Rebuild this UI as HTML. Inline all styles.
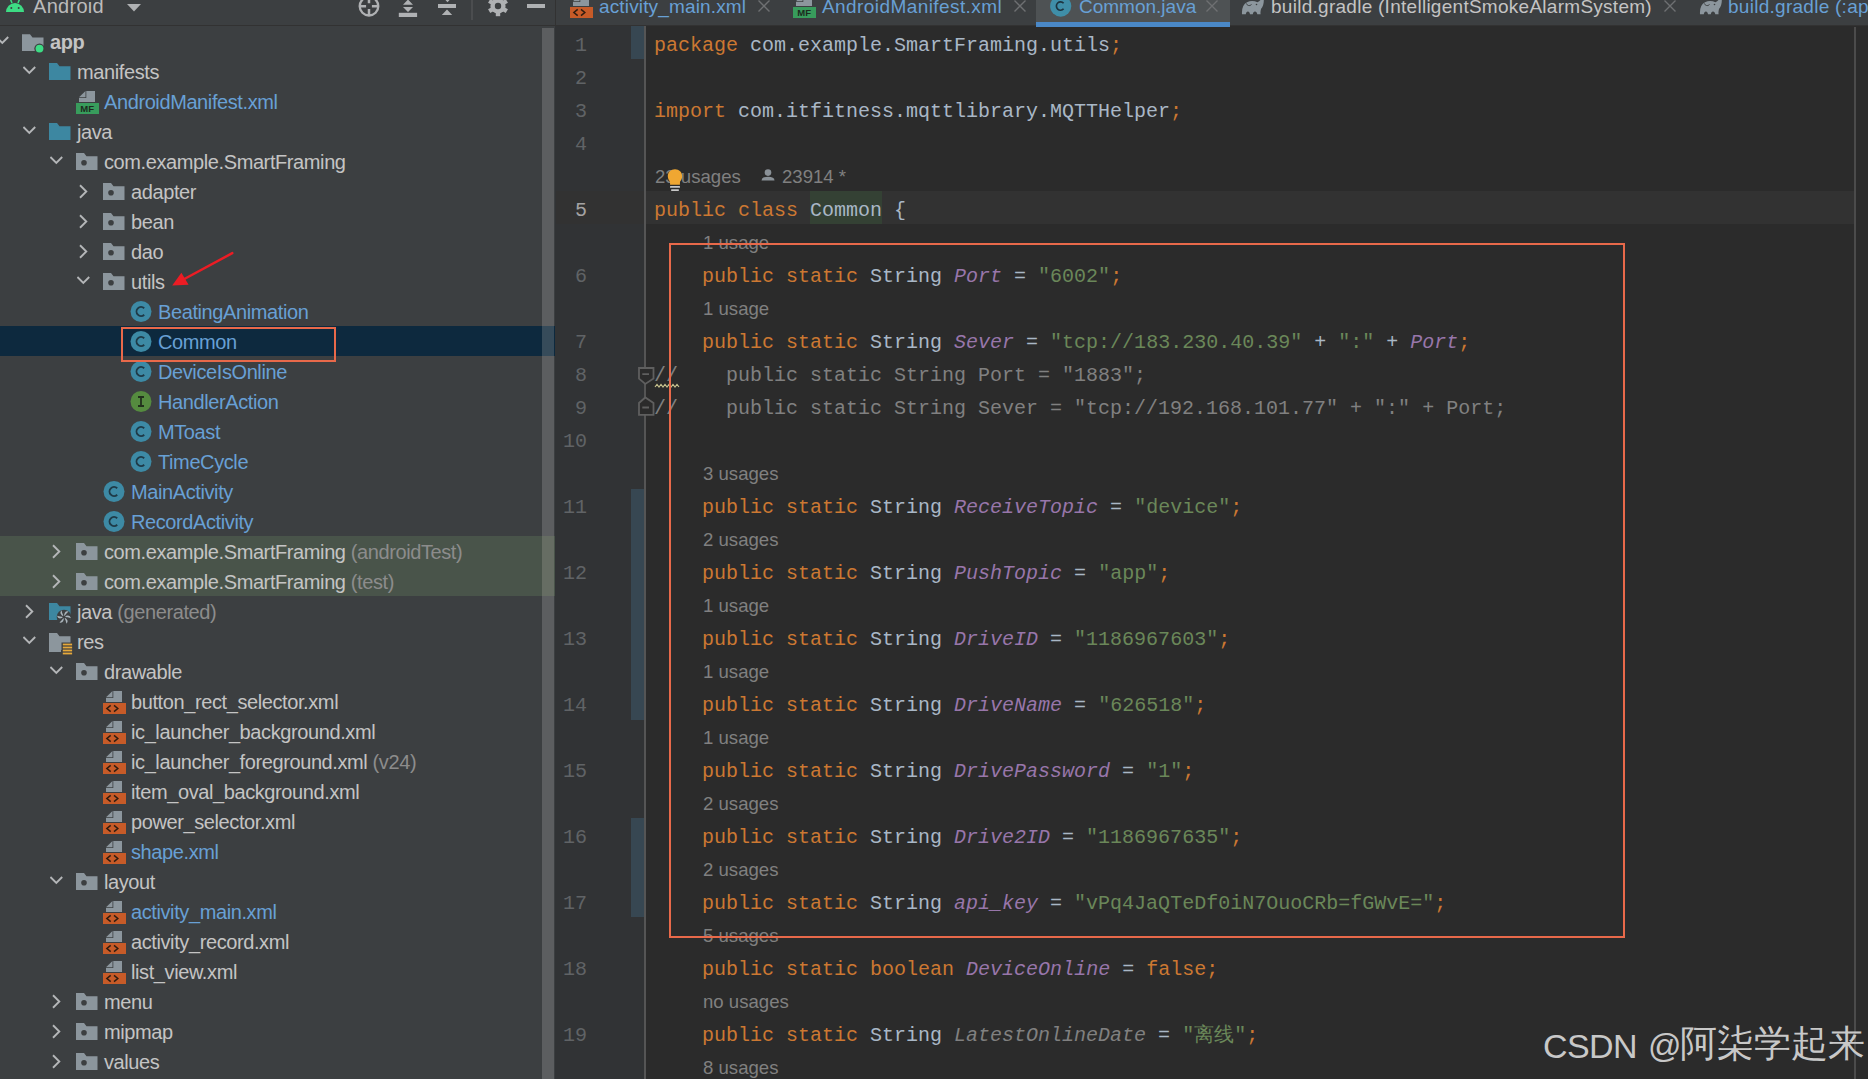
<!DOCTYPE html><html><head><meta charset="utf-8"><style>
*{margin:0;padding:0;box-sizing:border-box}
html,body{width:1868px;height:1079px;overflow:hidden;background:#2b2b2b}
.abs{position:absolute}
#panel{position:absolute;left:0;top:0;width:555px;height:1079px;background:#3c3f41;overflow:hidden}
#phead{position:absolute;left:0;top:0;width:556px;height:26px;background:#3c3f41;border-bottom:1px solid #323232}
.tr{position:absolute;left:0;width:556px;height:30px}
.chev,.ic{position:absolute;top:0;height:30px}
.tt{position:absolute;top:1px;height:30px;line-height:30px;font-family:"Liberation Sans",sans-serif;font-size:20px;letter-spacing:-0.4px;white-space:pre;color:#c4c4c4}
#editor{position:absolute;left:556px;top:0;width:1312px;height:1079px;background:#2b2b2b;overflow:hidden}
#tabs{position:absolute;left:0;top:0;width:1312px;height:26px;background:#3c3f41;border-bottom:1px solid #323232}
.tab{position:absolute;top:0;height:26px;font-family:"Liberation Sans",sans-serif;font-size:19px;line-height:26px;white-space:pre}
#gutter{position:absolute;left:555px;top:26px;width:91px;height:1053px;background:#313335}
.ln{position:absolute;left:556px;width:31px;text-align:right;height:33px;padding-top:7px;line-height:26px;font-family:"Liberation Mono",monospace;font-size:20px;color:#606366}
.ln.cur{color:#a4a3a3}
.cl{position:absolute;left:654px;height:33px;line-height:33px;padding-top:7px;line-height:26px;font-family:"Liberation Mono",monospace;font-size:20px;white-space:pre;color:#a9b7c6}
.k{color:#cc7832} .s{color:#6a8759} .f{color:#9876aa;font-style:italic} .c{color:#808080}
.un{color:#808080;font-style:italic}
.hl{background:#344134}
.hint{position:absolute;height:33px;padding-top:2px;line-height:33px;font-family:"Liberation Sans",sans-serif;font-size:18.6px;white-space:pre;color:#808080}
</style></head><body>
<div id="panel">
<div id="phead">
<svg class="abs" style="left:5px;top:-3px" width="20" height="16" viewBox="0 0 20 16"><path d="M1 15 A9 9 0 0 1 19 15 Z" fill="#3ddc84"/><path d="M5 1 L7 6 M15 1 L13 6" stroke="#3ddc84" stroke-width="1.5"/><circle cx="6.3" cy="11" r="1" fill="#3c3f41"/><circle cx="13.7" cy="11" r="1" fill="#3c3f41"/></svg>
<div class="abs" style="left:33px;top:-7px;line-height:26px;font-family:'Liberation Sans',sans-serif;font-size:20px;letter-spacing:0.3px;color:#bbbbbb">Android</div>
<svg class="abs" style="left:127px;top:4px" width="14" height="8" viewBox="0 0 14 8"><path d="M0 0 H14 L7 7.5 Z" fill="#afb1b3"/></svg>
<svg class="abs" style="left:358px;top:-5px" width="22" height="22" viewBox="0 0 22 22"><circle cx="11" cy="11.2" r="9.3" fill="none" stroke="#afb1b3" stroke-width="2.3"/><path d="M11 1 V8.3 M11 14.1 V21 M1.5 11.2 H8.1 M13.9 11.2 H20.5" stroke="#afb1b3" stroke-width="2.5"/></svg>
<svg class="abs" style="left:398px;top:0px" width="20" height="18" viewBox="0 0 20 18"><path d="M5 4.8 L10 -0.5 L15 4.8 Z M5 7 H15 L10 12 Z" fill="#afb1b3"/><rect x="0.8" y="12.8" width="18.3" height="4.2" fill="#afb1b3"/></svg>
<svg class="abs" style="left:438px;top:0px" width="20" height="18" viewBox="0 0 20 18"><rect x="0" y="4" width="18" height="4" fill="#afb1b3"/><path d="M3.8 15.1 L9 9.6 L14.2 15.1 Z M7 -0.5 H12 L9.5 2.2 Z" fill="#afb1b3"/></svg>
<div class="abs" style="left:471px;top:0;width:2px;height:20px;background:#4b4d4f"></div>
<svg class="abs" style="left:487.5px;top:-4px" width="20" height="21" viewBox="0 0 20 21"><g fill="#afb1b3"><circle cx="10" cy="10" r="7.6"/><rect x="7.8" y="-0.2" width="4.4" height="5" transform="rotate(0 10 10)"/><rect x="7.8" y="-0.2" width="4.4" height="5" transform="rotate(60 10 10)"/><rect x="7.8" y="-0.2" width="4.4" height="5" transform="rotate(120 10 10)"/><rect x="7.8" y="-0.2" width="4.4" height="5" transform="rotate(180 10 10)"/><rect x="7.8" y="-0.2" width="4.4" height="5" transform="rotate(240 10 10)"/><rect x="7.8" y="-0.2" width="4.4" height="5" transform="rotate(300 10 10)"/></g><circle cx="10" cy="10" r="3.2" fill="#3c3f41"/></svg>
<div class="abs" style="left:527px;top:4px;width:18px;height:3.6px;background:#afb1b3"></div>
</div>
<div class="tr" style="top:26px;"><div class="chev" style="left:-4px"><svg width="14" height="30" viewBox="0 0 14 30"><path d="M0.4 11 L6.3 16.9 L12.2 11" fill="none" stroke="#b4b6b8" stroke-width="1.9"/></svg></div><div class="ic" style="left:22px"><svg width="26" height="30" viewBox="0 0 26 30"><path d="M0 8.2 H8 L10.5 11.5 H21.5 V25 H0 Z" fill="#8c969d"/><circle cx="17.5" cy="22.6" r="5.2" fill="#3c3f41"/><circle cx="17.5" cy="22.6" r="3.9" fill="#3ddc84"/></svg></div><div class="tt" style="left:50px;color:#c4c4c4;font-weight:bold;">app</div></div><div class="tr" style="top:56px;"><div class="chev" style="left:23px"><svg width="14" height="30" viewBox="0 0 14 30"><path d="M0.4 11 L6.3 16.9 L12.2 11" fill="none" stroke="#b4b6b8" stroke-width="1.9"/></svg></div><div class="ic" style="left:49px"><svg width="26" height="30" viewBox="0 0 26 30"><path d="M0 7 H8 L10.5 10.3 H21.5 V24 H0 Z" fill="#3d87a1"/></svg></div><div class="tt" style="left:77px;color:#c4c4c4;">manifests</div></div><div class="tr" style="top:86px;"><div class="ic" style="left:76px"><svg width="26" height="30" viewBox="0 0 26 30"><path d="M10.3 5 H19 V16 H3 V12 H10.3 Z" fill="#8c969d"/><path d="M3 11.2 L9.5 5 V11.2 Z" fill="#8c969d"/><rect x="0" y="17" width="23" height="11" fill="#389c5c"/><text x="11.3" y="26.3" font-family="Liberation Sans" font-size="9.5" font-weight="bold" fill="#1c2b20" text-anchor="middle" letter-spacing="0.2">MF</text></svg></div><div class="tt" style="left:104px;color:#68a0d5;">AndroidManifest.xml</div></div><div class="tr" style="top:116px;"><div class="chev" style="left:23px"><svg width="14" height="30" viewBox="0 0 14 30"><path d="M0.4 11 L6.3 16.9 L12.2 11" fill="none" stroke="#b4b6b8" stroke-width="1.9"/></svg></div><div class="ic" style="left:49px"><svg width="26" height="30" viewBox="0 0 26 30"><path d="M0 7 H8 L10.5 10.3 H21.5 V24 H0 Z" fill="#3d87a1"/></svg></div><div class="tt" style="left:77px;color:#c4c4c4;">java</div></div><div class="tr" style="top:146px;"><div class="chev" style="left:50px"><svg width="14" height="30" viewBox="0 0 14 30"><path d="M0.4 11 L6.3 16.9 L12.2 11" fill="none" stroke="#b4b6b8" stroke-width="1.9"/></svg></div><div class="ic" style="left:76px"><svg width="26" height="30" viewBox="0 0 26 30"><path d="M0 7 H8 L10.5 10.3 H21.5 V24 H0 Z" fill="#8c969d"/><circle cx="8" cy="16.8" r="2.8" fill="#3c3f41"/></svg></div><div class="tt" style="left:104px;color:#c4c4c4;">com.example.SmartFraming</div></div><div class="tr" style="top:176px;"><div class="chev" style="left:77px"><svg width="14" height="30" viewBox="0 0 14 30"><path d="M3 9.3 L9.3 15.5 L3 21.7" fill="none" stroke="#b4b6b8" stroke-width="1.9"/></svg></div><div class="ic" style="left:103px"><svg width="26" height="30" viewBox="0 0 26 30"><path d="M0 7 H8 L10.5 10.3 H21.5 V24 H0 Z" fill="#8c969d"/><circle cx="8" cy="16.8" r="2.8" fill="#3c3f41"/></svg></div><div class="tt" style="left:131px;color:#c4c4c4;">adapter</div></div><div class="tr" style="top:206px;"><div class="chev" style="left:77px"><svg width="14" height="30" viewBox="0 0 14 30"><path d="M3 9.3 L9.3 15.5 L3 21.7" fill="none" stroke="#b4b6b8" stroke-width="1.9"/></svg></div><div class="ic" style="left:103px"><svg width="26" height="30" viewBox="0 0 26 30"><path d="M0 7 H8 L10.5 10.3 H21.5 V24 H0 Z" fill="#8c969d"/><circle cx="8" cy="16.8" r="2.8" fill="#3c3f41"/></svg></div><div class="tt" style="left:131px;color:#c4c4c4;">bean</div></div><div class="tr" style="top:236px;"><div class="chev" style="left:77px"><svg width="14" height="30" viewBox="0 0 14 30"><path d="M3 9.3 L9.3 15.5 L3 21.7" fill="none" stroke="#b4b6b8" stroke-width="1.9"/></svg></div><div class="ic" style="left:103px"><svg width="26" height="30" viewBox="0 0 26 30"><path d="M0 7 H8 L10.5 10.3 H21.5 V24 H0 Z" fill="#8c969d"/><circle cx="8" cy="16.8" r="2.8" fill="#3c3f41"/></svg></div><div class="tt" style="left:131px;color:#c4c4c4;">dao</div></div><div class="tr" style="top:266px;"><div class="chev" style="left:77px"><svg width="14" height="30" viewBox="0 0 14 30"><path d="M0.4 11 L6.3 16.9 L12.2 11" fill="none" stroke="#b4b6b8" stroke-width="1.9"/></svg></div><div class="ic" style="left:103px"><svg width="26" height="30" viewBox="0 0 26 30"><path d="M0 7 H8 L10.5 10.3 H21.5 V24 H0 Z" fill="#8c969d"/><circle cx="8" cy="16.8" r="2.8" fill="#3c3f41"/></svg></div><div class="tt" style="left:131px;color:#c4c4c4;">utils</div></div><div class="tr" style="top:296px;"><div class="ic" style="left:130px"><svg width="26" height="30" viewBox="0 0 26 30"><circle cx="11" cy="15.5" r="10.5" fill="#3d8aa5"/><path d="M14.2 12.3 A4.5 4.5 0 1 0 14.2 18.7" fill="none" stroke="#1f3a47" stroke-width="1.9"/></svg></div><div class="tt" style="left:158px;color:#68a0d5;">BeatingAnimation</div></div><div class="tr" style="top:326px;background:#0d293e;"><div class="ic" style="left:130px"><svg width="26" height="30" viewBox="0 0 26 30"><circle cx="11" cy="15.5" r="10.5" fill="#3d8aa5"/><path d="M14.2 12.3 A4.5 4.5 0 1 0 14.2 18.7" fill="none" stroke="#1f3a47" stroke-width="1.9"/></svg></div><div class="tt" style="left:158px;color:#68a0d5;">Common</div></div><div class="tr" style="top:356px;"><div class="ic" style="left:130px"><svg width="26" height="30" viewBox="0 0 26 30"><circle cx="11" cy="15.5" r="10.5" fill="#3d8aa5"/><path d="M14.2 12.3 A4.5 4.5 0 1 0 14.2 18.7" fill="none" stroke="#1f3a47" stroke-width="1.9"/></svg></div><div class="tt" style="left:158px;color:#68a0d5;">DeviceIsOnline</div></div><div class="tr" style="top:386px;"><div class="ic" style="left:130px"><svg width="26" height="30" viewBox="0 0 26 30"><circle cx="11" cy="15.5" r="10.5" fill="#558b3f"/><path d="M8 11 H14 M11 11 V20 M8 20 H14" fill="none" stroke="#22301d" stroke-width="1.8"/></svg></div><div class="tt" style="left:158px;color:#68a0d5;">HandlerAction</div></div><div class="tr" style="top:416px;"><div class="ic" style="left:130px"><svg width="26" height="30" viewBox="0 0 26 30"><circle cx="11" cy="15.5" r="10.5" fill="#3d8aa5"/><path d="M14.2 12.3 A4.5 4.5 0 1 0 14.2 18.7" fill="none" stroke="#1f3a47" stroke-width="1.9"/></svg></div><div class="tt" style="left:158px;color:#68a0d5;">MToast</div></div><div class="tr" style="top:446px;"><div class="ic" style="left:130px"><svg width="26" height="30" viewBox="0 0 26 30"><circle cx="11" cy="15.5" r="10.5" fill="#3d8aa5"/><path d="M14.2 12.3 A4.5 4.5 0 1 0 14.2 18.7" fill="none" stroke="#1f3a47" stroke-width="1.9"/></svg></div><div class="tt" style="left:158px;color:#68a0d5;">TimeCycle</div></div><div class="tr" style="top:476px;"><div class="ic" style="left:103px"><svg width="26" height="30" viewBox="0 0 26 30"><circle cx="11" cy="15.5" r="10.5" fill="#3d8aa5"/><path d="M14.2 12.3 A4.5 4.5 0 1 0 14.2 18.7" fill="none" stroke="#1f3a47" stroke-width="1.9"/></svg></div><div class="tt" style="left:131px;color:#68a0d5;">MainActivity</div></div><div class="tr" style="top:506px;"><div class="ic" style="left:103px"><svg width="26" height="30" viewBox="0 0 26 30"><circle cx="11" cy="15.5" r="10.5" fill="#3d8aa5"/><path d="M14.2 12.3 A4.5 4.5 0 1 0 14.2 18.7" fill="none" stroke="#1f3a47" stroke-width="1.9"/></svg></div><div class="tt" style="left:131px;color:#68a0d5;">RecordActivity</div></div><div class="tr" style="top:536px;background:#49544a;"><div class="chev" style="left:50px"><svg width="14" height="30" viewBox="0 0 14 30"><path d="M3 9.3 L9.3 15.5 L3 21.7" fill="none" stroke="#b4b6b8" stroke-width="1.9"/></svg></div><div class="ic" style="left:76px"><svg width="26" height="30" viewBox="0 0 26 30"><path d="M0 7 H8 L10.5 10.3 H21.5 V24 H0 Z" fill="#8c969d"/><circle cx="8" cy="16.8" r="2.8" fill="#3c3f41"/></svg></div><div class="tt" style="left:104px;color:#c4c4c4;">com.example.SmartFraming<span style="color:#8c8c8c"> (androidTest)</span></div></div><div class="tr" style="top:566px;background:#49544a;"><div class="chev" style="left:50px"><svg width="14" height="30" viewBox="0 0 14 30"><path d="M3 9.3 L9.3 15.5 L3 21.7" fill="none" stroke="#b4b6b8" stroke-width="1.9"/></svg></div><div class="ic" style="left:76px"><svg width="26" height="30" viewBox="0 0 26 30"><path d="M0 7 H8 L10.5 10.3 H21.5 V24 H0 Z" fill="#8c969d"/><circle cx="8" cy="16.8" r="2.8" fill="#3c3f41"/></svg></div><div class="tt" style="left:104px;color:#c4c4c4;">com.example.SmartFraming<span style="color:#8c8c8c"> (test)</span></div></div><div class="tr" style="top:596px;"><div class="chev" style="left:23px"><svg width="14" height="30" viewBox="0 0 14 30"><path d="M3 9.3 L9.3 15.5 L3 21.7" fill="none" stroke="#b4b6b8" stroke-width="1.9"/></svg></div><div class="ic" style="left:49px"><svg width="26" height="30" viewBox="0 0 26 30"><path d="M0 7 H8 L10.5 10.3 H21.5 V24 H0 Z" fill="#3d87a1"/><circle cx="15" cy="21" r="7.3" fill="#3c3f41"/><g fill="#aab4bb"><path d="M15 21 Q15 14.5 19.5 15.5 Q17 17.5 15 21 Z" transform="rotate(0 15 21)"/><path d="M15 21 Q15 14.5 19.5 15.5 Q17 17.5 15 21 Z" transform="rotate(60 15 21)"/><path d="M15 21 Q15 14.5 19.5 15.5 Q17 17.5 15 21 Z" transform="rotate(120 15 21)"/><path d="M15 21 Q15 14.5 19.5 15.5 Q17 17.5 15 21 Z" transform="rotate(180 15 21)"/><path d="M15 21 Q15 14.5 19.5 15.5 Q17 17.5 15 21 Z" transform="rotate(240 15 21)"/><path d="M15 21 Q15 14.5 19.5 15.5 Q17 17.5 15 21 Z" transform="rotate(300 15 21)"/></g><circle cx="15" cy="21" r="1.6" fill="#3c3f41"/></svg></div><div class="tt" style="left:77px;color:#c4c4c4;">java<span style="color:#8c8c8c"> (generated)</span></div></div><div class="tr" style="top:626px;"><div class="chev" style="left:23px"><svg width="14" height="30" viewBox="0 0 14 30"><path d="M0.4 11 L6.3 16.9 L12.2 11" fill="none" stroke="#b4b6b8" stroke-width="1.9"/></svg></div><div class="ic" style="left:49px"><svg width="26" height="30" viewBox="0 0 26 30"><path d="M0 7 H8 L10.5 10.3 H21.5 V24 H12 V26 H0 Z" fill="#8c969d"/><rect x="12.5" y="16.5" width="12" height="13" fill="#3c3f41"/><g fill="#e6a93a"><rect x="13.8" y="17.6" width="9.3" height="1.8"/><rect x="13.8" y="20.6" width="9.3" height="1.8"/><rect x="13.8" y="23.6" width="9.3" height="1.8"/><rect x="13.8" y="26.6" width="9.3" height="1.8"/></g></svg></div><div class="tt" style="left:77px;color:#c4c4c4;">res</div></div><div class="tr" style="top:656px;"><div class="chev" style="left:50px"><svg width="14" height="30" viewBox="0 0 14 30"><path d="M0.4 11 L6.3 16.9 L12.2 11" fill="none" stroke="#b4b6b8" stroke-width="1.9"/></svg></div><div class="ic" style="left:76px"><svg width="26" height="30" viewBox="0 0 26 30"><path d="M0 7 H8 L10.5 10.3 H21.5 V24 H0 Z" fill="#8c969d"/><circle cx="8" cy="16.8" r="2.8" fill="#3c3f41"/></svg></div><div class="tt" style="left:104px;color:#c4c4c4;">drawable</div></div><div class="tr" style="top:686px;"><div class="ic" style="left:103px"><svg width="26" height="30" viewBox="0 0 26 30"><path d="M10.3 5 H19 V16 H3 V12 H10.3 Z" fill="#8c969d"/><path d="M3 11.2 L9.5 5 V11.2 Z" fill="#8c969d"/><rect x="0" y="17" width="23" height="11" fill="#c75b28"/><path d="M7.7 19.4 L3.9 22.5 L7.7 25.6 M11 19.4 L14.8 22.5 L11 25.6" fill="none" stroke="#2e1c10" stroke-width="1.5"/></svg></div><div class="tt" style="left:131px;color:#c4c4c4;">button_rect_selector.xml</div></div><div class="tr" style="top:716px;"><div class="ic" style="left:103px"><svg width="26" height="30" viewBox="0 0 26 30"><path d="M10.3 5 H19 V16 H3 V12 H10.3 Z" fill="#8c969d"/><path d="M3 11.2 L9.5 5 V11.2 Z" fill="#8c969d"/><rect x="0" y="17" width="23" height="11" fill="#c75b28"/><path d="M7.7 19.4 L3.9 22.5 L7.7 25.6 M11 19.4 L14.8 22.5 L11 25.6" fill="none" stroke="#2e1c10" stroke-width="1.5"/></svg></div><div class="tt" style="left:131px;color:#c4c4c4;">ic_launcher_background.xml</div></div><div class="tr" style="top:746px;"><div class="ic" style="left:103px"><svg width="26" height="30" viewBox="0 0 26 30"><path d="M10.3 5 H19 V16 H3 V12 H10.3 Z" fill="#8c969d"/><path d="M3 11.2 L9.5 5 V11.2 Z" fill="#8c969d"/><rect x="0" y="17" width="23" height="11" fill="#c75b28"/><path d="M7.7 19.4 L3.9 22.5 L7.7 25.6 M11 19.4 L14.8 22.5 L11 25.6" fill="none" stroke="#2e1c10" stroke-width="1.5"/></svg></div><div class="tt" style="left:131px;color:#c4c4c4;">ic_launcher_foreground.xml<span style="color:#8c8c8c"> (v24)</span></div></div><div class="tr" style="top:776px;"><div class="ic" style="left:103px"><svg width="26" height="30" viewBox="0 0 26 30"><path d="M10.3 5 H19 V16 H3 V12 H10.3 Z" fill="#8c969d"/><path d="M3 11.2 L9.5 5 V11.2 Z" fill="#8c969d"/><rect x="0" y="17" width="23" height="11" fill="#c75b28"/><path d="M7.7 19.4 L3.9 22.5 L7.7 25.6 M11 19.4 L14.8 22.5 L11 25.6" fill="none" stroke="#2e1c10" stroke-width="1.5"/></svg></div><div class="tt" style="left:131px;color:#c4c4c4;">item_oval_background.xml</div></div><div class="tr" style="top:806px;"><div class="ic" style="left:103px"><svg width="26" height="30" viewBox="0 0 26 30"><path d="M10.3 5 H19 V16 H3 V12 H10.3 Z" fill="#8c969d"/><path d="M3 11.2 L9.5 5 V11.2 Z" fill="#8c969d"/><rect x="0" y="17" width="23" height="11" fill="#c75b28"/><path d="M7.7 19.4 L3.9 22.5 L7.7 25.6 M11 19.4 L14.8 22.5 L11 25.6" fill="none" stroke="#2e1c10" stroke-width="1.5"/></svg></div><div class="tt" style="left:131px;color:#c4c4c4;">power_selector.xml</div></div><div class="tr" style="top:836px;"><div class="ic" style="left:103px"><svg width="26" height="30" viewBox="0 0 26 30"><path d="M10.3 5 H19 V16 H3 V12 H10.3 Z" fill="#8c969d"/><path d="M3 11.2 L9.5 5 V11.2 Z" fill="#8c969d"/><rect x="0" y="17" width="23" height="11" fill="#c75b28"/><path d="M7.7 19.4 L3.9 22.5 L7.7 25.6 M11 19.4 L14.8 22.5 L11 25.6" fill="none" stroke="#2e1c10" stroke-width="1.5"/></svg></div><div class="tt" style="left:131px;color:#68a0d5;">shape.xml</div></div><div class="tr" style="top:866px;"><div class="chev" style="left:50px"><svg width="14" height="30" viewBox="0 0 14 30"><path d="M0.4 11 L6.3 16.9 L12.2 11" fill="none" stroke="#b4b6b8" stroke-width="1.9"/></svg></div><div class="ic" style="left:76px"><svg width="26" height="30" viewBox="0 0 26 30"><path d="M0 7 H8 L10.5 10.3 H21.5 V24 H0 Z" fill="#8c969d"/><circle cx="8" cy="16.8" r="2.8" fill="#3c3f41"/></svg></div><div class="tt" style="left:104px;color:#c4c4c4;">layout</div></div><div class="tr" style="top:896px;"><div class="ic" style="left:103px"><svg width="26" height="30" viewBox="0 0 26 30"><path d="M10.3 5 H19 V16 H3 V12 H10.3 Z" fill="#8c969d"/><path d="M3 11.2 L9.5 5 V11.2 Z" fill="#8c969d"/><rect x="0" y="17" width="23" height="11" fill="#c75b28"/><path d="M7.7 19.4 L3.9 22.5 L7.7 25.6 M11 19.4 L14.8 22.5 L11 25.6" fill="none" stroke="#2e1c10" stroke-width="1.5"/></svg></div><div class="tt" style="left:131px;color:#68a0d5;">activity_main.xml</div></div><div class="tr" style="top:926px;"><div class="ic" style="left:103px"><svg width="26" height="30" viewBox="0 0 26 30"><path d="M10.3 5 H19 V16 H3 V12 H10.3 Z" fill="#8c969d"/><path d="M3 11.2 L9.5 5 V11.2 Z" fill="#8c969d"/><rect x="0" y="17" width="23" height="11" fill="#c75b28"/><path d="M7.7 19.4 L3.9 22.5 L7.7 25.6 M11 19.4 L14.8 22.5 L11 25.6" fill="none" stroke="#2e1c10" stroke-width="1.5"/></svg></div><div class="tt" style="left:131px;color:#c4c4c4;">activity_record.xml</div></div><div class="tr" style="top:956px;"><div class="ic" style="left:103px"><svg width="26" height="30" viewBox="0 0 26 30"><path d="M10.3 5 H19 V16 H3 V12 H10.3 Z" fill="#8c969d"/><path d="M3 11.2 L9.5 5 V11.2 Z" fill="#8c969d"/><rect x="0" y="17" width="23" height="11" fill="#c75b28"/><path d="M7.7 19.4 L3.9 22.5 L7.7 25.6 M11 19.4 L14.8 22.5 L11 25.6" fill="none" stroke="#2e1c10" stroke-width="1.5"/></svg></div><div class="tt" style="left:131px;color:#c4c4c4;">list_view.xml</div></div><div class="tr" style="top:986px;"><div class="chev" style="left:50px"><svg width="14" height="30" viewBox="0 0 14 30"><path d="M3 9.3 L9.3 15.5 L3 21.7" fill="none" stroke="#b4b6b8" stroke-width="1.9"/></svg></div><div class="ic" style="left:76px"><svg width="26" height="30" viewBox="0 0 26 30"><path d="M0 7 H8 L10.5 10.3 H21.5 V24 H0 Z" fill="#8c969d"/><circle cx="8" cy="16.8" r="2.8" fill="#3c3f41"/></svg></div><div class="tt" style="left:104px;color:#c4c4c4;">menu</div></div><div class="tr" style="top:1016px;"><div class="chev" style="left:50px"><svg width="14" height="30" viewBox="0 0 14 30"><path d="M3 9.3 L9.3 15.5 L3 21.7" fill="none" stroke="#b4b6b8" stroke-width="1.9"/></svg></div><div class="ic" style="left:76px"><svg width="26" height="30" viewBox="0 0 26 30"><path d="M0 7 H8 L10.5 10.3 H21.5 V24 H0 Z" fill="#8c969d"/><circle cx="8" cy="16.8" r="2.8" fill="#3c3f41"/></svg></div><div class="tt" style="left:104px;color:#c4c4c4;">mipmap</div></div><div class="tr" style="top:1046px;"><div class="chev" style="left:50px"><svg width="14" height="30" viewBox="0 0 14 30"><path d="M3 9.3 L9.3 15.5 L3 21.7" fill="none" stroke="#b4b6b8" stroke-width="1.9"/></svg></div><div class="ic" style="left:76px"><svg width="26" height="30" viewBox="0 0 26 30"><path d="M0 7 H8 L10.5 10.3 H21.5 V24 H0 Z" fill="#8c969d"/><circle cx="8" cy="16.8" r="2.8" fill="#3c3f41"/></svg></div><div class="tt" style="left:104px;color:#c4c4c4;">values</div></div>
<div class="abs" style="left:121px;top:327px;width:215px;height:35px;border:2px solid #e8694a"></div>
<div class="abs" style="left:542px;top:28px;width:12px;height:1051px;background:#5c5e60;opacity:1"></div>
<div class="abs" style="left:542px;top:536px;width:12px;height:60px;background:#666d63"></div>
<div class="abs" style="left:542px;top:326px;width:12px;height:30px;background:#364b5a"></div>
</div>
<div class="abs" style="left:555px;top:0;width:1px;height:26px;background:#323232"></div>
<svg class="abs" style="left:160px;top:245px" width="80" height="50" viewBox="0 0 80 50"><path d="M72.3 8.1 L22 35.3" stroke="#ec1c24" stroke-width="2.4" stroke-linecap="round"/><path d="M12.2 40.6 L21.4 27.8 L28.6 39.8 Z" fill="#ec1c24"/></svg>
<div id="gutter"></div>
<div class="ln" style="top:26px">1</div><div class="ln" style="top:59px">2</div><div class="ln" style="top:92px">3</div><div class="ln" style="top:125px">4</div><div class="abs" style="top:191px;left:556px;width:89px;height:33px;background:#323232"></div><div class="ln cur" style="top:191px">5</div><div class="ln" style="top:257px">6</div><div class="ln" style="top:323px">7</div><div class="ln" style="top:356px">8</div><div class="ln" style="top:389px">9</div><div class="ln" style="top:422px">10</div><div class="ln" style="top:488px">11</div><div class="ln" style="top:554px">12</div><div class="ln" style="top:620px">13</div><div class="ln" style="top:686px">14</div><div class="ln" style="top:752px">15</div><div class="ln" style="top:818px">16</div><div class="ln" style="top:884px">17</div><div class="ln" style="top:950px">18</div><div class="ln" style="top:1016px">19</div>
<div class="abs" style="left:644px;top:26px;width:2px;height:1053px;background:#555555"></div>
<div class="abs" style="left:631px;top:26px;width:13px;height:33px;background:#374752"></div>
<div class="abs" style="left:631px;top:489px;width:13px;height:231px;background:#374752"></div>
<div class="abs" style="left:631px;top:818px;width:13px;height:99px;background:#374752"></div>
<div class="abs" style="left:1854px;top:27px;width:2px;height:1052px;background:#4b4b4b"></div>
<div class="cl" style="top:26px"><span class="k">package</span> com.example.SmartFraming.utils<span class="k">;</span></div><div class="cl" style="top:59px"></div><div class="cl" style="top:92px"><span class="k">import</span> com.itfitness.mqttlibrary.MQTTHelper<span class="k">;</span></div><div class="cl" style="top:125px"></div><div class="hint" style="top:158px;left:655px">23 usages</div><div class="hint" style="top:158px;left:782px">23914 *</div><svg class="abs" style="left:761px;top:169px" width="15" height="13" viewBox="0 0 15 13"><circle cx="7" cy="3.6" r="3.3" fill="#8a9197"/><path d="M0.5 11.5 Q0.5 7.8 7 7.8 Q13.5 7.8 13.5 11.5 Z" fill="#8a9197"/></svg><div class="abs" style="top:191px;left:646px;width:1208px;height:33px;background:#323232"></div><div class="abs" style="top:191px;left:810px;width:72px;height:33px;background:#344134"></div><div class="cl" style="top:191px"><span class="k">public</span> <span class="k">class</span> Common {</div><div class="hint" style="top:224px;left:703px">1 usage</div><div class="cl" style="top:257px">    <span class="k">public</span> <span class="k">static</span> String <span class="f">Port</span> = <span class="s">&quot;6002&quot;</span><span class="k">;</span></div><div class="hint" style="top:290px;left:703px">1 usage</div><div class="cl" style="top:323px">    <span class="k">public</span> <span class="k">static</span> String <span class="f">Sever</span> = <span class="s">&quot;tcp://183.230.40.39&quot;</span> + <span class="s">&quot;:&quot;</span> + <span class="f">Port</span><span class="k">;</span></div><div class="cl" style="top:356px"><span class="c"><span class="wv">//</span>    public static String Port = "1883";</span></div><div class="cl" style="top:389px"><span class="c">//    public static String Sever = "tcp://192.168.101.77" + ":" + Port;</span></div><div class="cl" style="top:422px"></div><div class="hint" style="top:455px;left:703px">3 usages</div><div class="cl" style="top:488px">    <span class="k">public</span> <span class="k">static</span> String <span class="f">ReceiveTopic</span> = <span class="s">&quot;device&quot;</span><span class="k">;</span></div><div class="hint" style="top:521px;left:703px">2 usages</div><div class="cl" style="top:554px">    <span class="k">public</span> <span class="k">static</span> String <span class="f">PushTopic</span> = <span class="s">&quot;app&quot;</span><span class="k">;</span></div><div class="hint" style="top:587px;left:703px">1 usage</div><div class="cl" style="top:620px">    <span class="k">public</span> <span class="k">static</span> String <span class="f">DriveID</span> = <span class="s">&quot;1186967603&quot;</span><span class="k">;</span></div><div class="hint" style="top:653px;left:703px">1 usage</div><div class="cl" style="top:686px">    <span class="k">public</span> <span class="k">static</span> String <span class="f">DriveName</span> = <span class="s">&quot;626518&quot;</span><span class="k">;</span></div><div class="hint" style="top:719px;left:703px">1 usage</div><div class="cl" style="top:752px">    <span class="k">public</span> <span class="k">static</span> String <span class="f">DrivePassword</span> = <span class="s">&quot;1&quot;</span><span class="k">;</span></div><div class="hint" style="top:785px;left:703px">2 usages</div><div class="cl" style="top:818px">    <span class="k">public</span> <span class="k">static</span> String <span class="f">Drive2ID</span> = <span class="s">&quot;1186967635&quot;</span><span class="k">;</span></div><div class="hint" style="top:851px;left:703px">2 usages</div><div class="cl" style="top:884px">    <span class="k">public</span> <span class="k">static</span> String <span class="f">api_key</span> = <span class="s">&quot;vPq4JaQTeDf0iN7OuoCRb=fGWvE=&quot;</span><span class="k">;</span></div><div class="hint" style="top:917px;left:703px">5 usages</div><div class="cl" style="top:950px">    <span class="k">public</span> <span class="k">static</span> <span class="k">boolean</span> <span class="f">DeviceOnline</span> = <span class="k">false</span><span class="k">;</span></div><div class="hint" style="top:983px;left:703px">no usages</div><div class="cl" style="top:1016px">    <span class="k">public</span> <span class="k">static</span> String <span class="un">LatestOnlineDate</span> = <span class="s">&quot;离线&quot;</span><span class="k">;</span></div><div class="hint" style="top:1049px;left:703px">8 usages</div>
<svg class="abs" style="left:630px;top:360px" width="30" height="60" viewBox="0 0 30 60"><path d="M9 8 H23.5 V18.6 L15.3 24 L9 18.6 Z M12.3 14.1 H19" fill="#2b2b2b" stroke="#5f5f5f" stroke-width="1.8"/><path d="M9 54.8 H23.5 V43 L15.3 37.5 L9 43 Z M12.3 47.5 H19" fill="#2b2b2b" stroke="#5f5f5f" stroke-width="1.8"/></svg>
<svg class="abs" style="left:654px;top:383px" width="26" height="5" viewBox="0 0 26 5"><path d="M1 4 L3 1.5 L5 4 L7 1.5 L9 4 L11 1.5 L13 4 L15 1.5 L17 4 L19 1.5 L21 4 L23 1.5 L25 4" fill="none" stroke="#c9c48f" stroke-width="1.2"/></svg>
<svg class="abs" style="left:666px;top:168px" width="18" height="26" viewBox="0 0 18 26"><path d="M9 1.2 C13.2 1.2 16.2 4.2 16.2 8.3 C16.2 11 14.8 12.5 14 13.8 L13.9 16.7 H4.1 L4 13.8 C3.2 12.5 1.8 11 1.8 8.3 C1.8 4.2 4.8 1.2 9 1.2 Z" fill="#f0a732"/><rect x="4" y="18" width="10" height="1.8" rx="0.6" fill="#c8c8c8"/><rect x="5" y="21.3" width="8" height="1.8" rx="0.8" fill="#c8c8c8"/></svg>
<div class="abs" style="left:669px;top:243px;width:956px;height:695px;border:2px solid #e8694a"></div>
<div class="abs" style="left:1543px;top:1023px;font-family:'Liberation Sans',sans-serif;font-size:34px;line-height:46px;color:#c8c8c8;white-space:pre;letter-spacing:-0.6px">CSDN</div>
<div class="abs" style="left:1648px;top:1023px;font-family:'Liberation Sans',sans-serif;font-size:33px;line-height:46px;color:#c8c8c8;white-space:pre">@</div>
<div class="abs" style="left:1680px;top:1021px;font-family:'Liberation Sans',sans-serif;font-size:37px;line-height:46px;color:#c8c8c8;white-space:pre">阿柒学起来</div>
<div id="tabs" style="left:556px">
<div class="abs" style="left:480px;top:0;width:194px;height:26px;background:#4e5254"></div>
<div class="abs" style="left:480px;top:22px;width:194px;height:5px;background:#4a88c7"></div>
<div class="ic" style="left:14px;top:-10px"><svg width="26" height="30" viewBox="0 0 26 30"><path d="M10.3 5 H19 V16 H3 V12 H10.3 Z" fill="#8c969d"/><path d="M3 11.2 L9.5 5 V11.2 Z" fill="#8c969d"/><rect x="0" y="17" width="23" height="11" fill="#c75b28"/><path d="M7.7 19.4 L3.9 22.5 L7.7 25.6 M11 19.4 L14.8 22.5 L11 25.6" fill="none" stroke="#2e1c10" stroke-width="1.5"/></svg></div>
<div class="tab" style="left:43px;top:-6px;color:#68a0d5;letter-spacing:0.15px">activity_main.xml</div>
<div class="ic" style="left:237px;top:-10px"><svg width="26" height="30" viewBox="0 0 26 30"><path d="M10.3 5 H19 V16 H3 V12 H10.3 Z" fill="#8c969d"/><path d="M3 11.2 L9.5 5 V11.2 Z" fill="#8c969d"/><rect x="0" y="17" width="23" height="11" fill="#389c5c"/><text x="11.3" y="26.3" font-family="Liberation Sans" font-size="9.5" font-weight="bold" fill="#1c2b20" text-anchor="middle" letter-spacing="0.2">MF</text></svg></div>
<div class="tab" style="left:266px;top:-6px;color:#68a0d5;letter-spacing:0.42px">AndroidManifest.xml</div>
<svg class="abs" style="left:494px;top:-5px" width="22" height="22" viewBox="0 0 22 22"><circle cx="10.7" cy="11.1" r="10.6" fill="#3f8ea8"/><path d="M13.6 8.3 A4.1 4.2 0 1 0 13.6 13.8" fill="none" stroke="#1d3440" stroke-width="1.7"/></svg>
<div class="tab" style="left:523px;top:-6px;color:#68a0d5">Common.java</div>
<div class="tab" style="left:715px;top:-6px;color:#c4c4c4;letter-spacing:0.27px">build.gradle (IntelligentSmokeAlarmSystem)</div>
<div class="tab" style="left:1172px;top:-6px;color:#68a0d5;letter-spacing:0.27px">build.gradle (:app)</div>
<svg class="abs" style="left:202px;top:0px" width="12" height="12" viewBox="0 0 12 12"><path d="M0.5 0.5 L11.5 11.5 M11.5 0.5 L0.5 11.5" stroke="#6e7072" stroke-width="1.4"/></svg>
<svg class="abs" style="left:458px;top:0px" width="12" height="12" viewBox="0 0 12 12"><path d="M0.5 0.5 L11.5 11.5 M11.5 0.5 L0.5 11.5" stroke="#6e7072" stroke-width="1.4"/></svg>
<svg class="abs" style="left:650px;top:0px" width="12" height="12" viewBox="0 0 12 12"><path d="M0.5 0.5 L11.5 11.5 M11.5 0.5 L0.5 11.5" stroke="#6e7072" stroke-width="1.4"/></svg>
<svg class="abs" style="left:1108px;top:0px" width="12" height="12" viewBox="0 0 12 12"><path d="M0.5 0.5 L11.5 11.5 M11.5 0.5 L0.5 11.5" stroke="#6e7072" stroke-width="1.4"/></svg>
<svg class="abs" style="left:685px;top:-1px" width="24" height="17" viewBox="0 0 24 17"><path d="M1 15.2 C0.6 9 2.5 5 6 3.2 C9.5 1.5 13 1.6 16.5 3.2 C18 2.5 19.5 1.5 20 0 L22.8 0.5 C23 4 22 7.5 20 10 C19.5 12 19.3 13.8 19.6 15.2 H16.3 C15.8 13.5 15.3 12.5 14 12.5 C12.7 12.5 12.2 13.5 11.8 15.2 H9 C8.6 13.5 8.1 12.5 6.9 12.5 C5.7 12.5 5.2 13.5 4.8 15.2 Z" fill="#8c969d"/><path d="M5.5 4.5 C6 6.5 8.5 7.5 10.5 5.5" fill="none" stroke="#3c3f41" stroke-width="1"/><circle cx="15.5" cy="5.5" r="0.8" fill="#3c3f41"/></svg>
<svg class="abs" style="left:1143px;top:-1px" width="24" height="17" viewBox="0 0 24 17"><path d="M1 15.2 C0.6 9 2.5 5 6 3.2 C9.5 1.5 13 1.6 16.5 3.2 C18 2.5 19.5 1.5 20 0 L22.8 0.5 C23 4 22 7.5 20 10 C19.5 12 19.3 13.8 19.6 15.2 H16.3 C15.8 13.5 15.3 12.5 14 12.5 C12.7 12.5 12.2 13.5 11.8 15.2 H9 C8.6 13.5 8.1 12.5 6.9 12.5 C5.7 12.5 5.2 13.5 4.8 15.2 Z" fill="#8c969d"/><path d="M5.5 4.5 C6 6.5 8.5 7.5 10.5 5.5" fill="none" stroke="#3c3f41" stroke-width="1"/><circle cx="15.5" cy="5.5" r="0.8" fill="#3c3f41"/></svg>
</div>
</body></html>
